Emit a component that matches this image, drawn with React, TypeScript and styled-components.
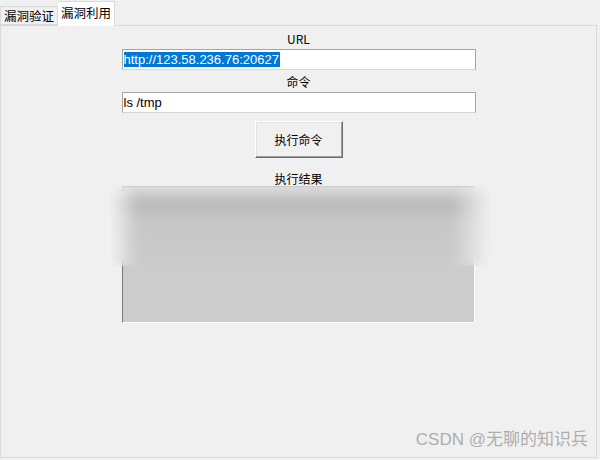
import styled, { createGlobalStyle } from "styled-components";

const GlobalStyle = createGlobalStyle`
  html, body {
    margin: 0;
    padding: 0;
    background: #f0f0f0;
  }
  body {
    font-family: "Noto Sans CJK SC", "Liberation Sans", sans-serif;
  }
`;

const Window = styled.div`
  position: relative;
  display: flex;
  flex-flow: column nowrap;
  width: 600px;
  height: 460px;
  background-color: #f0f0f0;
  overflow: hidden;
`;

const TabStrip = styled.div`
  display: flex;
  flex-flow: row nowrap;
  align-items: flex-end;
  height: 25px;
`;

const Tab = styled.div<{ $active?: boolean }>`
  display: flex;
  align-items: center;
  justify-content: center;
  box-sizing: border-box;
  height: ${({ $active }) => ($active ? "25px" : "19px")};
  padding: ${({ $active }) => ($active ? "0 3px 2px" : "2px 3px 0")};
  margin-bottom: ${({ $active }) => ($active ? "-1px" : "0")};
  border: 1px solid #d9d9d9;
  border-bottom: ${({ $active }) => ($active ? "none" : "1px solid #d9d9d9")};
  border-left: ${({ $active }) => ($active ? "none" : "1px solid #d9d9d9")};
  background-color: ${({ $active }) => ($active ? "#ffffff" : "#f0f0f0")};
  color: #000;
  font-size: 12.5px;
  line-height: 1;
  z-index: ${({ $active }) => ($active ? 1 : 0)};
`;

const Pane = styled.div`
  flex: 1;
  display: flex;
  flex-flow: column nowrap;
  align-items: center;
  margin: 0 3px 2px 0;
  border: 1px solid #d9d9d9;
`;

const FieldLabel = styled.div<{ $top: number }>`
  margin-top: ${({ $top }) => $top}px;
  height: 15px;
  line-height: 15px;
  font-size: 12px;
  color: #000;
`;

const TextInput = styled.div`
  box-sizing: border-box;
  width: 354px;
  height: 21px;
  margin-top: 3px;
  padding: 1px 1px;
  border: 1px solid #a5a5a5;
  border-bottom-color: #d6d6d6;
  background-color: #ffffff;
  font-family: "Liberation Sans", "Noto Sans CJK SC", sans-serif;
  font-size: 13px;
  line-height: 17px;
  color: #000;
  white-space: nowrap;
`;

const Selected = styled.span`
  background-color: #0078d7;
  color: #ffffff;
  padding-right: 1px;
`;

const Button = styled.button`
  box-sizing: border-box;
  width: 88px;
  height: 37px;
  margin-top: 8px;
  border: 1px solid;
  border-color: #ffffff #696969 #696969 #ffffff;
  box-shadow: inset -1px -1px #a0a0a0, inset 1px 1px #e3e3e3;
  background-color: #f0f0f0;
  font-family: "Noto Sans CJK SC", sans-serif;
  font-size: 12px;
  color: #000;
  padding: 0;
`;

const ResultBox = styled.div`
  position: relative;
  box-sizing: border-box;
  width: 353px;
  height: 137px;
  border: 1px solid;
  border-color: #a0a0a0 #ffffff #ffffff #7a7a7a;
  background-color: #cccccc;
`;

const BlurCover = styled.div`
  position: absolute;
  left: -12px;
  right: -16px;
  top: -1px;
  height: 80px;
  overflow: hidden;
`;

const BlurInner = styled.div`
  position: absolute;
  inset: -2px 0 0 0;
  background:
    linear-gradient(
      to right,
      #f0f0f0 0%,
      rgba(240, 240, 240, 0) 7%,
      rgba(240, 240, 240, 0) 90%,
      #f0f0f0 100%
    ),
    linear-gradient(
      to bottom,
      #ececec 0%,
      #d0d0d0 10%,
      #bababa 22%,
      #bebebe 32%,
      #c7c7c7 45%,
      #cbcbcb 100%
    );
  filter: blur(4px);
`;

const Watermark = styled.div`
  position: absolute;
  right: 12px;
  bottom: 10px;
  font-family: "Liberation Sans", "Noto Sans CJK SC", sans-serif;
  font-size: 17px;
  color: rgba(150, 150, 150, 0.75);
`;

const App = () => {
  return (
    <>
      <GlobalStyle />
      <Window>
        <TabStrip>
          <Tab>漏洞验证</Tab>
          <Tab $active>漏洞利用</Tab>
        </TabStrip>
        <Pane>
          <FieldLabel $top={5}>URL</FieldLabel>
          <TextInput>
            <Selected>http://123.58.236.76:20627</Selected>
          </TextInput>
          <FieldLabel $top={4}>命令</FieldLabel>
          <TextInput>ls /tmp</TextInput>
          <Button type="button">执行命令</Button>
          <FieldLabel $top={13}>执行结果</FieldLabel>
          <ResultBox>
            <BlurCover>
              <BlurInner />
            </BlurCover>
          </ResultBox>
        </Pane>
        <Watermark>CSDN @无聊的知识兵</Watermark>
      </Window>
    </>
  );
};

export default App;
